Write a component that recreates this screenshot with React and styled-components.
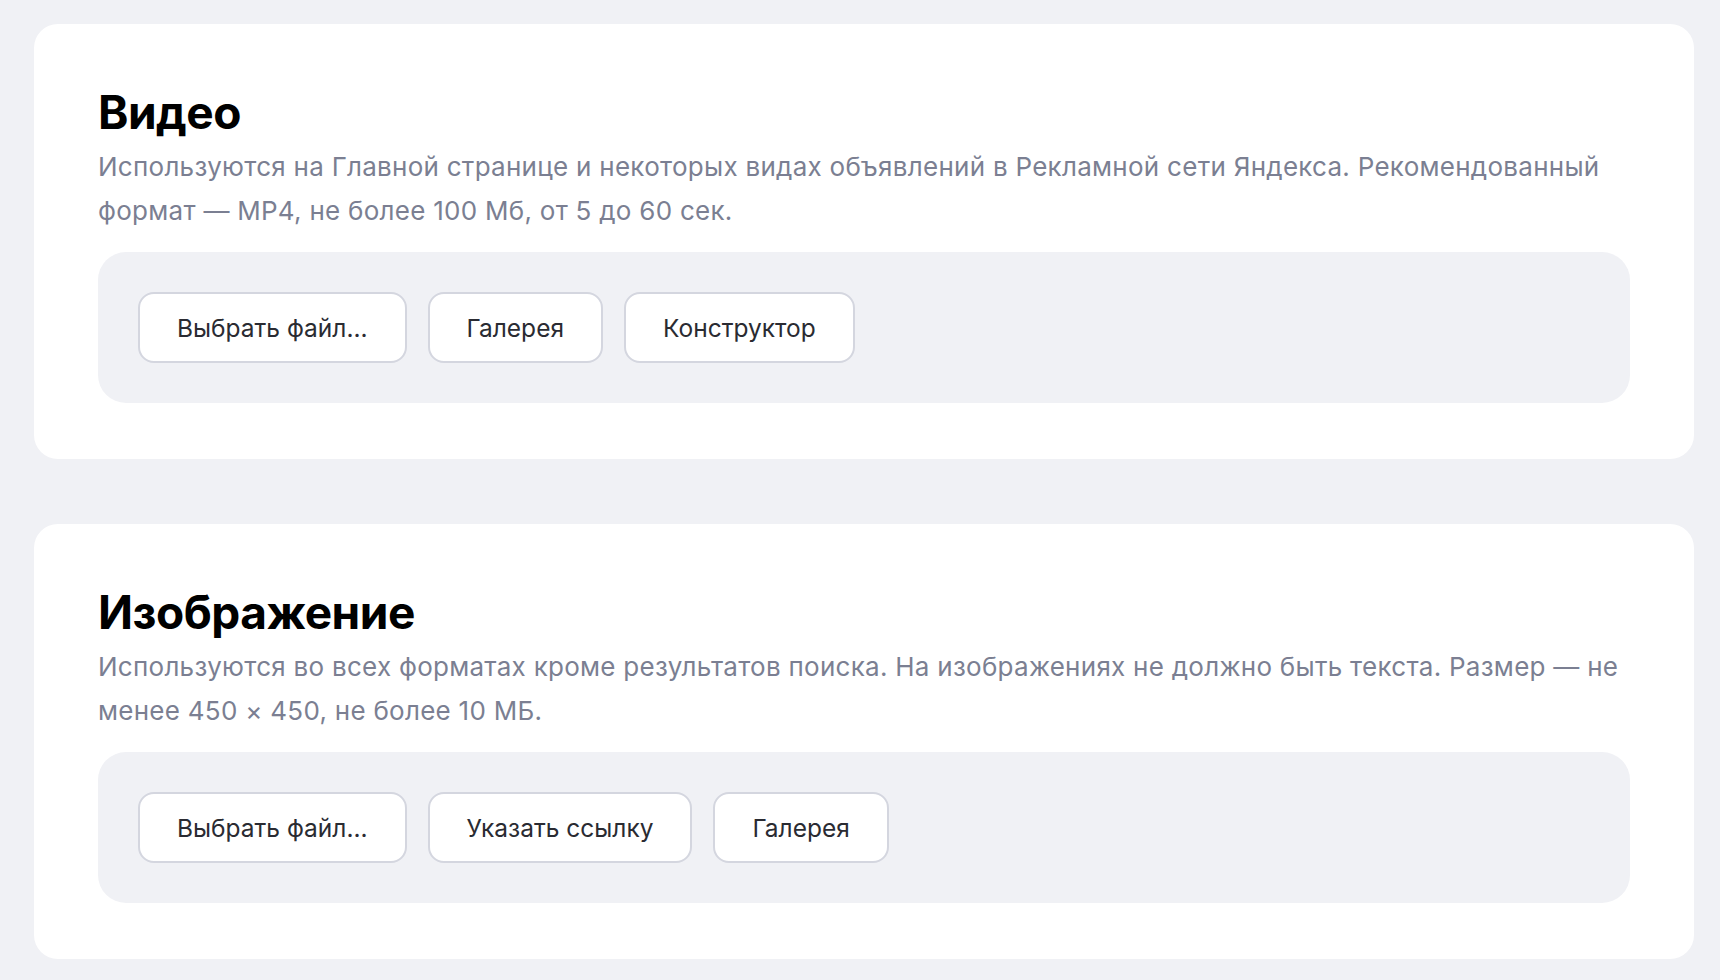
import React from "react";
import styled, { createGlobalStyle } from "styled-components";

const sections = [
  {
    title: "Видео",
    text:
      "Используются на Главной странице и некоторых видах объявлений в Рекламной сети Яндекса. Рекомендованный формат — MP4, не более 100 Мб, от 5 до 60 сек.",
    actions: ["Выбрать файл...", "Галерея", "Конструктор"],
  },
  {
    title: "Изображение",
    text:
      "Используются во всех форматах кроме результатов поиска. На изображениях не должно быть текста. Размер — не менее 450 × 450, не более 10 МБ.",
    actions: ["Выбрать файл...", "Указать ссылку", "Галерея"],
  },
];

function App() {
  return (
    <>
      <GlobalStyle />
      <Page>
        {sections.map((s) => (
          <Card key={s.title}>
            <Title>{s.title}</Title>
            <Description>{s.text}</Description>
            <Dropzone>
              {s.actions.map((a) => (
                <ActionButton key={a} type="button">
                  {a}
                </ActionButton>
              ))}
            </Dropzone>
          </Card>
        ))}
      </Page>
    </>
  );
}

const GlobalStyle = createGlobalStyle`
  body {
    margin: 0;
    background: #f0f1f5;
    font-family: Inter, "Noto Sans", Arial, sans-serif;
  }
`;

const Page = styled.div`
  display: flex;
  flex-direction: column;
  gap: 65px;
  padding: 24px 26px 24px 34px;
`;

const Card = styled.section`
  background: #ffffff;
  border-radius: 24px;
  padding: 60px 64px 56px;
`;

const Title = styled.h2`
  margin: 0;
  font-size: 46px;
  line-height: 56px;
  font-weight: 700;
  color: #000;
  letter-spacing: -0.5px;
`;

const Description = styled.p`
  margin: 5px 0 0;
  font-size: 26px;
  line-height: 44px;
  color: #7b7f92;
  letter-spacing: 0.27px;
`;

const Dropzone = styled.div`
  display: flex;
  gap: 21px;
  margin-top: 19px;
  padding: 40px;
  background: #f0f1f5;
  border-radius: 28px;
`;

const ActionButton = styled.button`
  height: 71px;
  padding: 0 37px;
  background: #fff;
  border: 2px solid #d4d6df;
  border-radius: 16px;
  font-family: inherit;
  font-size: 24.5px;
  color: #2a2b32;
  cursor: pointer;
`;

export default App;
